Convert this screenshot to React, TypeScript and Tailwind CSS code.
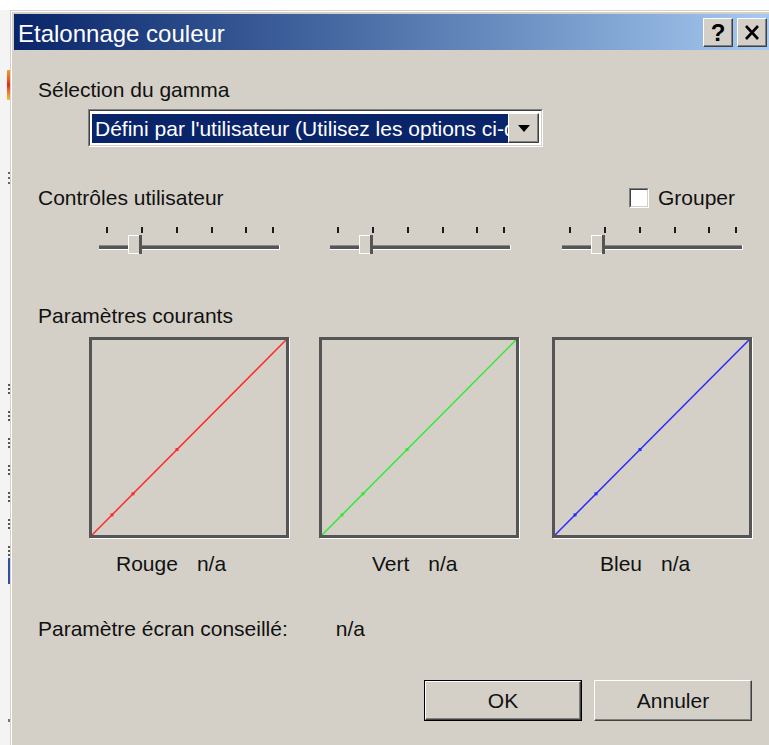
import React from 'react';

// tick marks along each gamma slider, in px from the track start
const TICKS = [7, 42, 77, 112, 146, 173];

// the three channel curves, with the left offset of their captions
const CHANNELS = [
  { name: 'Rouge', color: '#ff2b2b', captionPad: 'pl-[27px]', gap: '' },
  { name: 'Vert', color: '#33e833', captionPad: 'pl-[53px]', gap: 'ml-[30px]' },
  { name: 'Bleu', color: '#2a2aff', captionPad: 'pl-[48px]', gap: 'ml-[33px]' },
];

const Raised: React.FC<{ className?: string; children?: React.ReactNode }> = ({ className = '', children }) => (
  <div
    className={`bg-[#d4d0c8] border border-t-white border-l-white border-b-[#404040] border-r-[#404040] shadow-[inset_-1px_-1px_0_#808080] ${className}`}
  >
    {children}
  </div>
);

const GammaSlider: React.FC = () => (
  <svg width="182" height="30" className="block">
    {TICKS.map((x) => (
      <rect key={x} x={x} y={1} width={2} height={6} fill="#1a1a1a" />
    ))}
    {/* sunken track */}
    <rect x={0} y={19} width={180} height={1} fill="#8a8a8a" />
    <rect x={0} y={20} width={180} height={3} fill="#555" />
    <rect x={0} y={23} width={181} height={1} fill="#fff" />
    <rect x={180} y={19} width={1} height={5} fill="#fff" />
    {/* thumb */}
    <rect x={29} y={9} width={14} height={19} fill="#d4d0c8" />
    <rect x={29} y={9} width={12} height={1} fill="#fff" />
    <rect x={29} y={9} width={1} height={19} fill="#fff" />
    <rect x={30} y={27} width={11} height={1} fill="#fff" />
    <rect x={40} y={9} width={3} height={19} fill="#555" />
  </svg>
);

const CurveBox: React.FC<{ color: string }> = ({ color }) => {
  const w = 194;
  const h = 195;
  const nodes = [20, 41, 85];
  return (
    <div className="w-[200px] h-[201px] border-[3px] border-[#555] shadow-[1px_1px_0_#fff]">
      <svg width={w} height={h} className="block">
        <line x1={0} y1={h} x2={w} y2={0} stroke={color} strokeWidth={1.5} />
        {nodes.map((x) => (
          <rect key={x} x={x - 1.5} y={h - (x * h) / w - 1.5} width={3} height={3} fill={color} />
        ))}
      </svg>
    </div>
  );
};

export default function App() {
  const text = "text-[21px] leading-[24px] text-[#111]";

  return (
    <div className="w-[769px] h-[745px] overflow-hidden bg-white flex pt-[10px] font-['Liberation_Sans',Arial,sans-serif]">
      {/* sliver of the window behind */}
      <div className="w-[10px] shrink-0 bg-[#f4f4f4] flex flex-col items-end">
        <div className="mt-[60px] w-[3px] h-[30px] bg-linear-to-b from-[#f0a020] via-[#e02020] to-[#f0c040]" />
        <div className="mt-[72px] w-[2px] h-[2px] bg-[#666]" />
        <div className="mt-[3px] w-[2px] h-[2px] bg-[#666]" />
        <div className="mt-[3px] w-[2px] h-[2px] bg-[#666]" />
        <div className="mt-[200px] flex flex-col gap-[17px]">
          {[0, 1, 2, 3, 4, 5, 6].map((i) => (
            <div key={i} className="flex flex-col gap-[2px]">
              <div className="w-[2px] h-[2px] bg-[#555]" />
              <div className="w-[2px] h-[2px] bg-[#555]" />
              <div className="w-[2px] h-[2px] bg-[#555]" />
            </div>
          ))}
        </div>
        <div className="mt-[2px] w-[2px] h-[26px] bg-[#3050a0]" />
        <div className="mt-[135px] w-[2px] h-[3px] bg-[#777]" />
      </div>

      {/* dialog frame */}
      <div className="flex-1 border-t border-l border-[#d4d0c8]">
        <div className="h-full border-t border-l border-white">
          <div className="h-full bg-[#d4d0c8] pt-[2px] pl-[2px]">
            {/* title bar */}
            <div className="h-[36px] flex items-start bg-linear-to-r from-[#0a246a] to-[#a6caf0]">
              <div className="mt-[6px] pl-[4px] text-[24px] leading-[28px] text-white">Etalonnage couleur</div>
              <Raised className="ml-auto mt-[4px] w-[30px] h-[29px] flex items-center justify-center">
                <span className="text-[24px] leading-none font-bold text-black">?</span>
              </Raised>
              <Raised className="ml-[4px] mr-[2px] mt-[4px] w-[30px] h-[29px] flex items-center justify-center">
                <svg width="16" height="15" viewBox="0 0 16 15">
                  <path d="M2 1 L14 14 M14 1 L2 14" stroke="#000" strokeWidth="2.6" />
                </svg>
              </Raised>
            </div>

            {/* body */}
            <div className="pl-[24px] flex flex-col">
              <div className={`mt-[28px] ${text}`}>Sélection du gamma</div>

              {/* gamma preset combo, text runs under the arrow button */}
              <div className="mt-[7px] ml-[50px] w-[455px] h-[38px] border border-t-[#808080] border-l-[#808080] border-b-white border-r-white">
                <div className="h-full border border-t-[#404040] border-l-[#404040] border-b-[#d4d0c8] border-r-[#d4d0c8] bg-white flex items-center pl-[2px] pr-[2px]">
                  <div className="w-[416px] h-[29px] bg-[#0a246a] overflow-hidden whitespace-nowrap pl-[3px] text-[21px] leading-[29px] text-white">
                    Défini par l'utilisateur (Utilisez les options ci-d
                  </div>
                  <Raised className="w-[31px] h-[30px] flex items-center justify-center">
                    <svg width="12" height="7" viewBox="0 0 12 7">
                      <polygon points="0,0 12,0 6,7" fill="#000" />
                    </svg>
                  </Raised>
                </div>
              </div>

              <div className="mt-[39px] w-[697px] flex items-center justify-between">
                <div className={text}>Contrôles utilisateur</div>
                <div className="flex items-center gap-[9px]">
                  <div className="w-[20px] h-[20px] border border-t-[#808080] border-l-[#808080] border-b-white border-r-white">
                    <div className="w-full h-full border border-t-[#404040] border-l-[#404040] border-b-[#d4d0c8] border-r-[#d4d0c8] bg-white" />
                  </div>
                  <div className={text}>Grouper</div>
                </div>
              </div>

              <div className="mt-[16px] ml-[61px] flex">
                <GammaSlider />
                <div className="ml-[49px]">
                  <GammaSlider />
                </div>
                <div className="ml-[50px]">
                  <GammaSlider />
                </div>
              </div>

              <div className={`mt-[48px] ${text}`}>Paramètres courants</div>

              <div className="mt-[9px] ml-[51px] flex">
                {CHANNELS.map((c) => (
                  <div key={c.name} className={`w-[200px] ${c.gap}`}>
                    <CurveBox color={c.color} />
                    <div className={`mt-[14px] flex gap-[19px] ${c.captionPad} ${text}`}>
                      <span>{c.name}</span>
                      <span>n/a</span>
                    </div>
                  </div>
                ))}
              </div>

              <div className={`mt-[41px] flex gap-[48px] ${text}`}>
                <span>Paramètre écran conseillé:</span>
                <span>n/a</span>
              </div>

              <div className="mt-[39px] ml-[386px] flex">
                <div className="w-[158px] h-[41px] border border-black">
                  <Raised className="w-full h-full flex items-center justify-center">
                    <span className={text}>OK</span>
                  </Raised>
                </div>
                <Raised className="ml-[12px] w-[158px] h-[41px] flex items-center justify-center">
                  <span className={text}>Annuler</span>
                </Raised>
              </div>
            </div>
          </div>
        </div>
      </div>
    </div>
  );
}
